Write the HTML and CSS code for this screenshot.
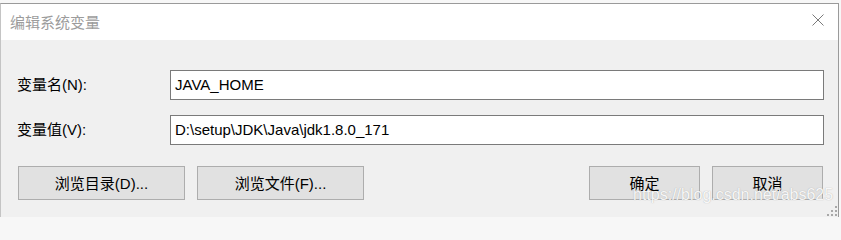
FILE: index.html
```html
<!DOCTYPE html>
<html lang="zh-CN">
<head>
<meta charset="utf-8">
<title>编辑系统变量</title>
<link rel="stylesheet" href="styles.css">
</head>
<body>
<div class="desk">
  <div class="window">
    <div class="titlebar">
      <span class="title">编辑系统变量</span>
      <svg class="close" width="12" height="12" viewBox="0 0 12 12" aria-hidden="true">
        <path d="M0.5 0.5 L11.5 11.5 M11.5 0.5 L0.5 11.5" stroke="#7a7a7a" stroke-width="1" fill="none"/>
      </svg>
    </div>
    <div class="content">
      <div class="form">
        <label class="label">变量名(N):</label>
        <div class="field">JAVA_HOME</div>
        <label class="label">变量值(V):</label>
        <div class="field">D:\setup\JDK\Java\jdk1.8.0_171</div>
      </div>
      <div class="buttons">
        <div class="btn wide">浏览目录(D)...</div>
        <div class="btn wide">浏览文件(F)...</div>
        <div class="spacer"></div>
        <div class="btn narrow">确定</div>
        <div class="btn narrow">取消</div>
      </div>
    </div>
    <svg class="grip" width="12" height="12" viewBox="0 0 12 12" aria-hidden="true">
      <rect x="9" y="1" width="2" height="2" fill="#a8a8a8"/>
      <rect x="5" y="5" width="2" height="2" fill="#a8a8a8"/>
      <rect x="9" y="5" width="2" height="2" fill="#a8a8a8"/>
      <rect x="1" y="9" width="2" height="2" fill="#a8a8a8"/>
      <rect x="5" y="9" width="2" height="2" fill="#a8a8a8"/>
      <rect x="9" y="9" width="2" height="2" fill="#a8a8a8"/>
    </svg>
  </div>
  <div class="watermark">https://blog.csdn.net/abs625</div>
</div>
</body>
</html>
```
FILE: styles.css
```css
html, body {
  margin: 0;
  padding: 0;
  height: 217px;
  overflow: hidden;
}
body {
  width: 841px;
  background: #f7f7f7;
  font-family: "Liberation Sans", "Noto Sans CJK SC", sans-serif;
  font-size: 15px;
  color: #000;
}
.desk {
  position: relative;
  width: 841px;
  height: 217px;
  padding-top: 3px;
  box-sizing: border-box;
  overflow: hidden;
}
.window {
  position: relative;
  width: 839px;
  height: 214px;
  box-sizing: border-box;
  border-top: 1px solid #9a9a9a;
  border-left: 1px solid #c4c4c4;
  border-right: 1px solid #9a9a9a;
  background: #f0f0f0;
}
.titlebar {
  height: 36px;
  background: #fff;
  display: flex;
  align-items: center;
  padding-left: 9px;
  padding-right: 14px;
}
.title {
  color: #9c9c9c;
  font-family: "Noto Sans CJK SC", sans-serif;
  font-size: 15px;
  flex: 1;
  line-height: 1;
  padding-bottom: 1px;
}
.close {
  display: block;
  margin-top: -4px;
}
.content {
  padding: 30px 14px 0 16px;
}
.form {
  display: grid;
  grid-template-columns: 153px 1fr;
  row-gap: 15px;
  align-items: center;
}
.label {
  font-size: 15px;
  line-height: 30px;
}
.field {
  height: 30px;
  box-sizing: border-box;
  border: 1px solid #7a7a7a;
  background: #fff;
  padding-left: 4px;
  line-height: 27px;
  font-size: 15px;
  white-space: nowrap;
}
.buttons {
  display: flex;
  gap: 12px;
  margin-top: 21px;
  padding-left: 1px;
  padding-right: 1px;
}
.spacer {
  flex: 1;
}
.btn {
  height: 34px;
  box-sizing: border-box;
  border: 1px solid #adadad;
  background: #e1e1e1;
  display: flex;
  align-items: center;
  justify-content: center;
  font-size: 15px;
  padding-bottom: 1px;
}
.wide {
  width: 167px;
}
.narrow {
  width: 111px;
}
.grip {
  position: absolute;
  right: 0;
  bottom: 0;
}
.watermark {
  position: absolute;
  left: 633px;
  top: 186px;
  font-family: "Liberation Sans", sans-serif;
  font-size: 16px;
  color: rgba(255, 255, 255, 0.92);
  text-shadow: 0 0 1px rgba(110, 110, 110, 0.55);
  white-space: nowrap;
}
```
